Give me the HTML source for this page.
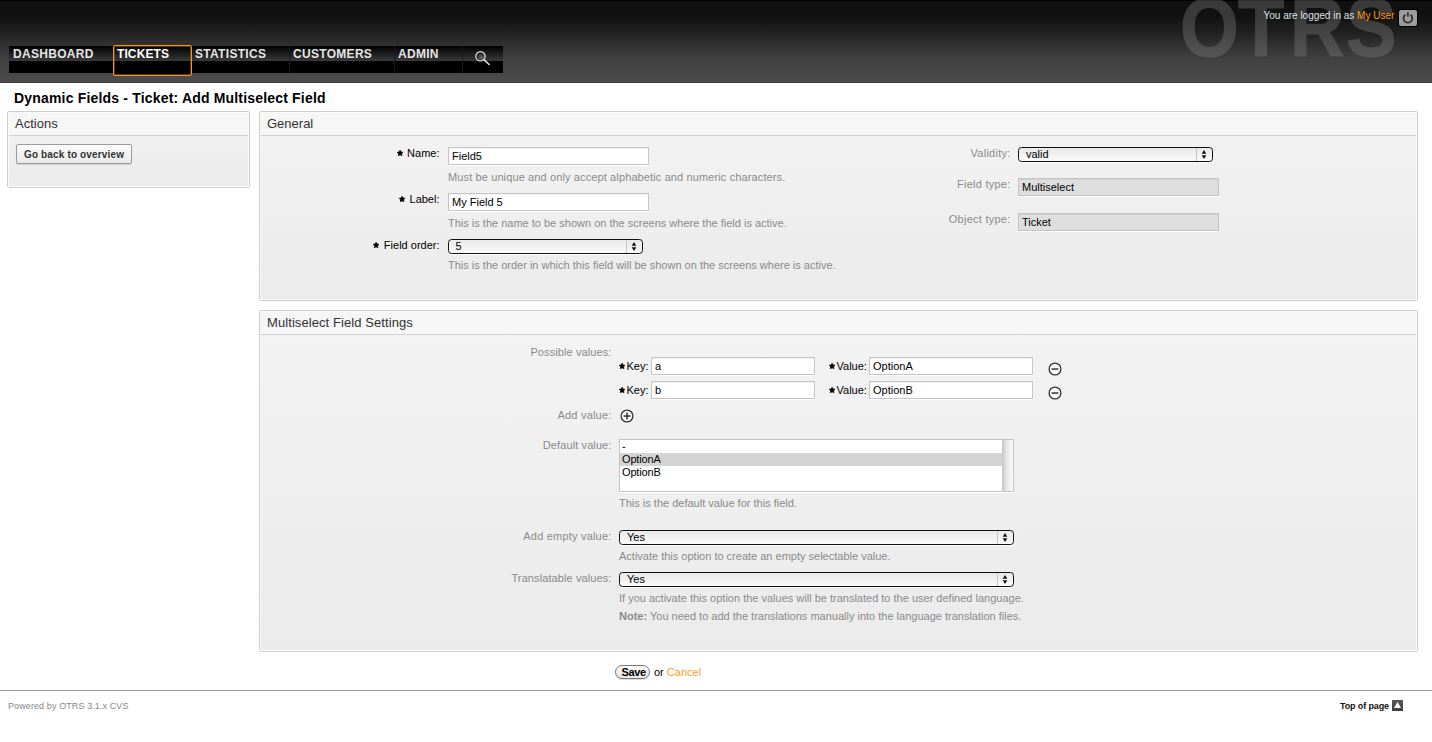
<!DOCTYPE html>
<html><head><meta charset="utf-8"><style>
*{box-sizing:border-box}
html,body{margin:0;padding:0;width:1432px;height:742px;overflow:hidden;background:#fff;font-family:"Liberation Sans",sans-serif;font-size:11px;color:#000}
.a{position:absolute;white-space:nowrap;line-height:1}
#hdr{position:absolute;left:0;top:0;width:1432px;height:83px;background:linear-gradient(#000 0,#000 1px,#111 1px,#111 16px,#222 34px,#303030 44px,#414141 60px,#4b4b4b 80px,#4b4b4b 82px,#3c3c3c 82px);overflow:hidden}
.lgw{position:absolute;left:0;top:0;width:1432px;height:83px;opacity:0.37}
.lg{position:absolute;top:-15px;font-size:84px;font-weight:700;color:#808080;-webkit-text-stroke:1.2px #808080;line-height:1;transform:scaleX(0.9);transform-origin:0 0}
#nav{position:absolute;left:9px;top:46px;width:494px;height:27px;background:#000}
.ni{position:absolute;top:0;height:27px;background:linear-gradient(#000 0px,#3a3a3a 15px,#000 15px,#000 27px)}
.nt{position:absolute;top:2px;font-size:12px;font-weight:700;color:#e4e4e4;line-height:1;white-space:nowrap;letter-spacing:0.3px}
.sep{position:absolute;top:0;width:1px;height:27px;background:#1a1a1a}
#sel{position:absolute;left:113px;top:45px;width:79px;height:31px;border:1px solid #f7961f;border-radius:1.5px;box-shadow:inset 0 0 0 0.5px rgba(247,150,31,0.7);background:linear-gradient(#000 0,#3a3a3a 15px,#000 15px,#000 100%)}
.box{position:absolute;border:1px solid #cdcdcd;border-radius:2px;background:linear-gradient(#f3f3f3,#ebebeb)}
.box .in{position:absolute;left:0;top:0;right:0;bottom:0;border:1px solid #fafafa}
.box .hd{position:absolute;left:0;top:0;right:0;height:24px;background:#f6f6f6;border-bottom:1px solid #d2d2d2}
.inp{position:absolute;background:#fff;border:1px solid #c6c6c6;box-shadow:0 1px 0 #fff, inset 0 1px 1px rgba(0,0,0,0.06)}
.ro{background:#dedede;border-color:#c4c4c4}
.selx{position:absolute;height:15px;border:1px solid #111;border-radius:3.5px;background:linear-gradient(#e9e9e9,#f0f0f0 50%,#fbfbfb);box-shadow:0 1px 0 #fff}
.selx .sp{position:absolute;right:15px;top:0;width:1px;height:13px;background:#c6c6c6}
.selx .arr{position:absolute;right:4.6px;top:2.2px}
.star{position:absolute}
.opt{position:absolute;left:0;height:13px}
</style></head><body>
<div id="hdr">
<div class="lgw">
<div class="lg" style="left:1180px">O</div>
<div class="lg" style="left:1238px">T</div>
<div class="lg" style="left:1290px">R</div>
<div class="lg" style="left:1345.5px">S</div>
</div>
<div class="a" style="left:1263.5px;top:11px;font-size:10px;color:#dfe3ea;font-weight:400;letter-spacing:0px;">You are logged in as <span style="color:#ff9c1a">My User</span></div>
<div style="position:absolute;left:1398px;top:9px;width:20px;height:18px;background:#050505;border-radius:3px"></div>
<div style="position:absolute;left:1399px;top:10px;width:18px;height:16px;background:#9d9d9d;border-radius:2px"></div>
<svg style="position:absolute;left:1399px;top:10px" width="18" height="16" viewBox="0 0 18 16"><path d="M6.31 4.74 A4.4 4.4 0 1 0 11.49 4.74" fill="none" stroke="#2c2c2c" stroke-width="1.7"/><rect x="8.1" y="2.1" width="1.6" height="4.5" fill="#2c2c2c"/></svg>
</div>
<div id="nav">
<div class="ni" style="left:0px;width:104px"></div>
<div class="ni" style="left:104px;width:79px"></div>
<div class="ni" style="left:183px;width:97px"></div>
<div class="ni" style="left:280px;width:105px"></div>
<div class="ni" style="left:385px;width:68px"></div>
<div class="ni" style="left:453px;width:41px"></div>
<div class="nt" style="left:4px;color:#e4e4e4">DASHBOARD</div>
<div class="nt" style="left:108px;color:#fff">TICKETS</div>
<div class="nt" style="left:186px;color:#e4e4e4">STATISTICS</div>
<div class="nt" style="left:284px;color:#e4e4e4">CUSTOMERS</div>
<div class="nt" style="left:389px;color:#e4e4e4">ADMIN</div>
<div class="sep" style="left:280px"></div>
<div class="sep" style="left:385px"></div>
<div class="sep" style="left:453px"></div>
<svg style="position:absolute;left:462px;top:3px" width="24" height="22" viewBox="0 0 24 22"><defs><radialGradient id="rg" cx="0.6" cy="0.65" r="0.6"><stop offset="0" stop-color="#6a6a6a"/><stop offset="1" stop-color="#1a1a1a"/></radialGradient></defs><circle cx="9.5" cy="7.3" r="4.7" fill="url(#rg)" stroke="#e0e0e0" stroke-width="1.2"/><path d="M12.9 10.7 L18.2 15.5" stroke="#e0e0e0" stroke-width="1.6" stroke-linecap="round"/></svg>
</div>
<div id="sel"></div>
<div class="nt" style="left:117px;top:48px;color:#fff;letter-spacing:0.1px">TICKETS</div>
<div class="a" style="left:14px;top:91px;font-size:14px;color:#000;font-weight:700;letter-spacing:0.18px;">Dynamic Fields - Ticket: Add Multiselect Field</div>
<div class="box" style="left:7px;top:111px;width:243px;height:77px"><div class="hd"></div><div class="in"></div></div>
<div class="a" style="left:15px;top:117px;font-size:13px;color:#333;font-weight:400;letter-spacing:0px;">Actions</div>
<div class="box" style="left:259px;top:111px;width:1159px;height:190px"><div class="hd"></div><div class="in"></div></div>
<div class="a" style="left:267px;top:117px;font-size:13px;color:#333;font-weight:400;letter-spacing:0px;">General</div>
<div class="box" style="left:259px;top:310px;width:1159px;height:342px"><div class="hd"></div><div class="in"></div></div>
<div class="a" style="left:267px;top:316px;font-size:13px;color:#333;font-weight:400;letter-spacing:0.08px;">Multiselect Field Settings</div>
<div style="position:absolute;left:16px;top:144px;width:116px;height:20px;border:1px solid #9c9c9c;border-radius:2px;background:linear-gradient(#fcfcfc,#e9e9e9);box-shadow:0 1px 1px rgba(0,0,0,0.12)"></div>
<div class="a" style="left:24px;top:150px;font-size:10px;color:#333;font-weight:700;letter-spacing:0.15px;">Go back to overview</div>
<div style="position:absolute;left:396.8px;top:150px"><svg class="star" width="6.2" height="6.2" viewBox="0 0 7 7"><path d="M3.50 0.20 L4.53 2.28 L6.83 2.62 L5.16 4.24 L5.56 6.53 L3.50 5.45 L1.44 6.53 L1.84 4.24 L0.17 2.62 L2.47 2.28 Z" fill="#000" stroke="#000" stroke-width="0.8" stroke-linejoin="round"/></svg></div>
<div class="a" style="left:39.5px;width:400px;text-align:right;top:148px;font-size:11px;color:#000;font-weight:400;letter-spacing:0px">Name:</div>
<div class="inp" style="left:448px;top:147px;width:201px;height:18px"></div>
<div class="a" style="left:452px;top:151px;font-size:11px;color:#000;font-weight:400;letter-spacing:0px;">Field5</div>
<div class="a" style="left:448px;top:172px;font-size:11px;color:#8a8a8a;font-weight:400;letter-spacing:0.12px;">Must be unique and only accept alphabetic and numeric characters.</div>
<div style="position:absolute;left:398.8px;top:196px"><svg class="star" width="6.2" height="6.2" viewBox="0 0 7 7"><path d="M3.50 0.20 L4.53 2.28 L6.83 2.62 L5.16 4.24 L5.56 6.53 L3.50 5.45 L1.44 6.53 L1.84 4.24 L0.17 2.62 L2.47 2.28 Z" fill="#000" stroke="#000" stroke-width="0.8" stroke-linejoin="round"/></svg></div>
<div class="a" style="left:39.5px;width:400px;text-align:right;top:194px;font-size:11px;color:#000;font-weight:400;letter-spacing:0px">Label:</div>
<div class="inp" style="left:448px;top:193px;width:201px;height:18px"></div>
<div class="a" style="left:452px;top:197px;font-size:11px;color:#000;font-weight:400;letter-spacing:0px;">My Field 5</div>
<div class="a" style="left:448px;top:218px;font-size:11px;color:#8a8a8a;font-weight:400;letter-spacing:0px;">This is the name to be shown on the screens where the field is active.</div>
<div style="position:absolute;left:372.8px;top:242px"><svg class="star" width="6.2" height="6.2" viewBox="0 0 7 7"><path d="M3.50 0.20 L4.53 2.28 L6.83 2.62 L5.16 4.24 L5.56 6.53 L3.50 5.45 L1.44 6.53 L1.84 4.24 L0.17 2.62 L2.47 2.28 Z" fill="#000" stroke="#000" stroke-width="0.8" stroke-linejoin="round"/></svg></div>
<div class="a" style="left:39.5px;width:400px;text-align:right;top:240px;font-size:11px;color:#000;font-weight:400;letter-spacing:0px">Field order:</div>
<div class="selx" style="left:448px;top:239px;width:195px"><div class="sp"></div><svg class="arr" width="6" height="10" viewBox="0 0 6 10"><path d="M3 0.1 L5.3 3.7 L0.7 3.7 Z M0.7 5.3 L5.3 5.3 L3 8.9 Z" fill="#111"/></svg></div>
<div class="a" style="left:455.5px;top:241px;font-size:11px;color:#000;font-weight:400;letter-spacing:0px;">5</div>
<div class="a" style="left:448px;top:260px;font-size:11px;color:#8a8a8a;font-weight:400;letter-spacing:0px;">This is the order in which this field will be shown on the screens where is active.</div>
<div class="a" style="left:610.5px;width:400px;text-align:right;top:148px;font-size:11px;color:#8a8a8a;font-weight:400;letter-spacing:0.25px">Validity:</div>
<div class="selx" style="left:1018px;top:147px;width:195px"><div class="sp"></div><svg class="arr" width="6" height="10" viewBox="0 0 6 10"><path d="M3 0.1 L5.3 3.7 L0.7 3.7 Z M0.7 5.3 L5.3 5.3 L3 8.9 Z" fill="#111"/></svg></div>
<div class="a" style="left:1026px;top:149px;font-size:11px;color:#000;font-weight:400;letter-spacing:0px;">valid</div>
<div class="a" style="left:610.5px;width:400px;text-align:right;top:179px;font-size:11px;color:#8a8a8a;font-weight:400;letter-spacing:0.25px">Field type:</div>
<div class="inp ro" style="left:1018px;top:178px;width:201px;height:18px"></div>
<div class="a" style="left:1022px;top:182px;font-size:11px;color:#000;font-weight:400;letter-spacing:0px;">Multiselect</div>
<div class="a" style="left:610.5px;width:400px;text-align:right;top:214px;font-size:11px;color:#8a8a8a;font-weight:400;letter-spacing:0.25px">Object type:</div>
<div class="inp ro" style="left:1018px;top:213px;width:201px;height:18px"></div>
<div class="a" style="left:1022px;top:217px;font-size:11px;color:#000;font-weight:400;letter-spacing:0px;">Ticket</div>
<div class="a" style="left:211.5px;width:400px;text-align:right;top:347px;font-size:11px;color:#8a8a8a;font-weight:400;letter-spacing:0.1px">Possible values:</div>
<div style="position:absolute;left:619px;top:363.3px"><svg class="star" width="6.2" height="6.2" viewBox="0 0 7 7"><path d="M3.50 0.20 L4.53 2.28 L6.83 2.62 L5.16 4.24 L5.56 6.53 L3.50 5.45 L1.44 6.53 L1.84 4.24 L0.17 2.62 L2.47 2.28 Z" fill="#000" stroke="#000" stroke-width="0.8" stroke-linejoin="round"/></svg></div>
<div class="a" style="left:626.5px;top:361px;font-size:11px;color:#000;font-weight:400;letter-spacing:0px;">Key:</div>
<div class="inp" style="left:651px;top:357px;width:164px;height:18px"></div>
<div class="a" style="left:655px;top:361px;font-size:11px;color:#000;font-weight:400;letter-spacing:0px;">a</div>
<div style="position:absolute;left:829px;top:363.3px"><svg class="star" width="6.2" height="6.2" viewBox="0 0 7 7"><path d="M3.50 0.20 L4.53 2.28 L6.83 2.62 L5.16 4.24 L5.56 6.53 L3.50 5.45 L1.44 6.53 L1.84 4.24 L0.17 2.62 L2.47 2.28 Z" fill="#000" stroke="#000" stroke-width="0.8" stroke-linejoin="round"/></svg></div>
<div class="a" style="left:836.5px;top:361px;font-size:11px;color:#000;font-weight:400;letter-spacing:0px;">Value:</div>
<div class="inp" style="left:869px;top:357px;width:164px;height:18px"></div>
<div class="a" style="left:873px;top:361px;font-size:11px;color:#000;font-weight:400;letter-spacing:0px;">OptionA</div>
<svg style="position:absolute;left:1047.5px;top:361.5px" width="14" height="14" viewBox="0 0 14 14"><circle cx="7" cy="7" r="5.9" fill="#f9f9f9" stroke="#333" stroke-width="1.3"/><rect x="3.6" y="6.3" width="6.8" height="1.5" fill="#333"/></svg>
<div style="position:absolute;left:619px;top:387.3px"><svg class="star" width="6.2" height="6.2" viewBox="0 0 7 7"><path d="M3.50 0.20 L4.53 2.28 L6.83 2.62 L5.16 4.24 L5.56 6.53 L3.50 5.45 L1.44 6.53 L1.84 4.24 L0.17 2.62 L2.47 2.28 Z" fill="#000" stroke="#000" stroke-width="0.8" stroke-linejoin="round"/></svg></div>
<div class="a" style="left:626.5px;top:385px;font-size:11px;color:#000;font-weight:400;letter-spacing:0px;">Key:</div>
<div class="inp" style="left:651px;top:381px;width:164px;height:18px"></div>
<div class="a" style="left:655px;top:385px;font-size:11px;color:#000;font-weight:400;letter-spacing:0px;">b</div>
<div style="position:absolute;left:829px;top:387.3px"><svg class="star" width="6.2" height="6.2" viewBox="0 0 7 7"><path d="M3.50 0.20 L4.53 2.28 L6.83 2.62 L5.16 4.24 L5.56 6.53 L3.50 5.45 L1.44 6.53 L1.84 4.24 L0.17 2.62 L2.47 2.28 Z" fill="#000" stroke="#000" stroke-width="0.8" stroke-linejoin="round"/></svg></div>
<div class="a" style="left:836.5px;top:385px;font-size:11px;color:#000;font-weight:400;letter-spacing:0px;">Value:</div>
<div class="inp" style="left:869px;top:381px;width:164px;height:18px"></div>
<div class="a" style="left:873px;top:385px;font-size:11px;color:#000;font-weight:400;letter-spacing:0px;">OptionB</div>
<svg style="position:absolute;left:1047.5px;top:385.5px" width="14" height="14" viewBox="0 0 14 14"><circle cx="7" cy="7" r="5.9" fill="#f9f9f9" stroke="#333" stroke-width="1.3"/><rect x="3.6" y="6.3" width="6.8" height="1.5" fill="#333"/></svg>
<div class="a" style="left:211.5px;width:400px;text-align:right;top:410px;font-size:11px;color:#8a8a8a;font-weight:400;letter-spacing:0.2px">Add value:</div>
<svg style="position:absolute;left:619.5px;top:408.5px" width="14" height="14" viewBox="0 0 14 14"><circle cx="7" cy="7" r="5.9" fill="#f9f9f9" stroke="#333" stroke-width="1.3"/><rect x="3.6" y="6.3" width="6.8" height="1.5" fill="#333"/><rect x="6.25" y="3.6" width="1.5" height="6.8" fill="#333"/></svg>
<div class="a" style="left:211.5px;width:400px;text-align:right;top:440px;font-size:11px;color:#8a8a8a;font-weight:400;letter-spacing:0.1px">Default value:</div>
<div style="position:absolute;left:619px;top:439px;width:395px;height:53px;background:#fff;border:1px solid #c4c4c4;box-shadow:0 1px 0 #fff"></div>
<div style="position:absolute;left:620px;top:453px;width:382px;height:13px;background:#d4d4d4"></div>
<div style="position:absolute;left:1002px;top:440px;width:11px;height:51px;background:linear-gradient(90deg,#c4c4c4,#e6e6e6 40%,#fafafa)"></div>
<div class="a" style="left:622px;top:441px;font-size:11px;color:#000;font-weight:400;letter-spacing:0px;">-</div>
<div class="a" style="left:622px;top:454px;font-size:11px;color:#000;font-weight:400;letter-spacing:-0.15px;">OptionA</div>
<div class="a" style="left:622px;top:467px;font-size:11px;color:#000;font-weight:400;letter-spacing:-0.15px;">OptionB</div>
<div class="a" style="left:619px;top:498px;font-size:11px;color:#8a8a8a;font-weight:400;letter-spacing:0px;">This is the default value for this field.</div>
<div class="a" style="left:211.5px;width:400px;text-align:right;top:531px;font-size:11px;color:#8a8a8a;font-weight:400;letter-spacing:0.2px">Add empty value:</div>
<div class="selx" style="left:619px;top:530px;width:395px"><div class="sp"></div><svg class="arr" width="6" height="10" viewBox="0 0 6 10"><path d="M3 0.1 L5.3 3.7 L0.7 3.7 Z M0.7 5.3 L5.3 5.3 L3 8.9 Z" fill="#111"/></svg></div>
<div class="a" style="left:627px;top:532px;font-size:11px;color:#000;font-weight:400;letter-spacing:0px;">Yes</div>
<div class="a" style="left:619px;top:551px;font-size:11px;color:#8a8a8a;font-weight:400;letter-spacing:0px;">Activate this option to create an empty selectable value.</div>
<div class="a" style="left:211.5px;width:400px;text-align:right;top:573px;font-size:11px;color:#8a8a8a;font-weight:400;letter-spacing:0.1px">Translatable values:</div>
<div class="selx" style="left:619px;top:572px;width:395px"><div class="sp"></div><svg class="arr" width="6" height="10" viewBox="0 0 6 10"><path d="M3 0.1 L5.3 3.7 L0.7 3.7 Z M0.7 5.3 L5.3 5.3 L3 8.9 Z" fill="#111"/></svg></div>
<div class="a" style="left:627px;top:574px;font-size:11px;color:#000;font-weight:400;letter-spacing:0px;">Yes</div>
<div class="a" style="left:619px;top:593px;font-size:11px;color:#8a8a8a;font-weight:400;letter-spacing:0px;">If you activate this option the values will be translated to the user defined language.</div>
<div class="a" style="left:619px;top:611px;font-size:11px;color:#8a8a8a;font-weight:400;letter-spacing:0px;"><b>Note:</b> You need to add the translations manually into the language translation files.</div>
<div style="position:absolute;left:615px;top:665px;width:35px;height:14px;border:1px solid #7a7a7a;border-radius:7px;background:linear-gradient(#fdfdfd,#e4e4e4);box-shadow:0 1px 1px rgba(0,0,0,0.15)"></div>
<div class="a" style="left:621.5px;top:667px;font-size:11px;color:#000;font-weight:700;letter-spacing:-0.35px;">Save</div>
<div class="a" style="left:654px;top:667px;font-size:11px;color:#000;font-weight:400;letter-spacing:0px;">or <span style="color:#ff9c1a">Cancel</span></div>
<div style="position:absolute;left:0;top:690px;width:1432px;height:1px;background:#9a9a9a"></div>
<div class="a" style="left:8px;top:702px;font-size:9px;color:#888;font-weight:400;letter-spacing:0.1px;">Powered by OTRS 3.1.x CVS</div>
<div class="a" style="left:1340px;top:702px;font-size:9px;color:#111;font-weight:700;letter-spacing:-0.12px;">Top of page</div>
<div style="position:absolute;left:1392px;top:700px;width:11px;height:11px;background:linear-gradient(#5a5a5a,#3e3e3e)"></div>
<svg style="position:absolute;left:1392px;top:700px" width="11" height="11" viewBox="0 0 11 11"><path d="M5.5 2 L9 8 L2 8 Z" fill="#fff"/></svg>
</body></html>
